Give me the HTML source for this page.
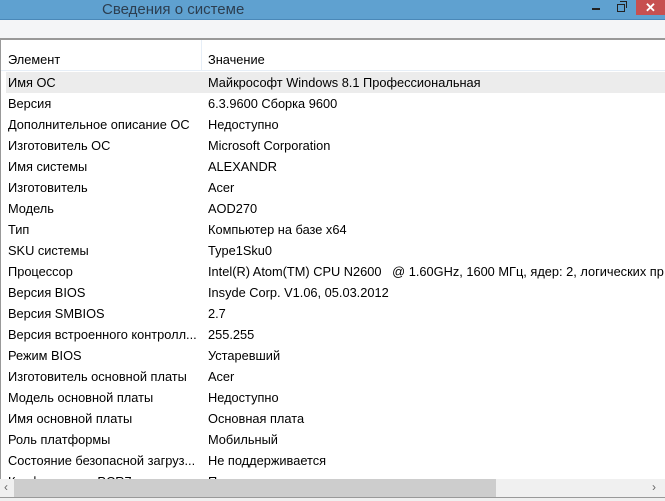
<!DOCTYPE html><html><head><style>
body{margin:0;width:665px;height:501px;overflow:hidden;background:#f0f0f0;font-family:"Liberation Sans",sans-serif;font-size:12.8px;color:#000;position:relative}
.tb{position:absolute;left:0;top:0;width:665px;height:19px;background:#5fa1d0;border-bottom:1px solid #4a88b8}
.tb .t{position:absolute;left:102px;top:1px;font-size:15px;color:#2c3e50;line-height:18px}
.cl{position:absolute;left:636px;top:0;width:29px;height:15px;background:#c75050;color:#fff;font-size:13px;text-align:center;line-height:15px;font-weight:bold}
.band{position:absolute;left:0;top:20px;width:665px;height:18px;background:#f4f5f7}
.list{position:absolute;left:0;top:38px;width:665px;height:441px;background:#fff;border-top:2px solid #999;border-left:1px solid #999;box-sizing:border-box;overflow:hidden}
.hd{position:absolute;top:0;left:0;width:665px;height:30px;border-bottom:1px solid #e6eef7}
.hd span,.r span{position:absolute;white-space:nowrap}
.hd .sep{position:absolute;left:200px;top:0;width:1px;height:30px;background:#e6eef7}
.r{position:absolute;left:5px;width:660px;height:21px;line-height:21px}
.sb{position:absolute;left:0;top:479px;width:665px;height:18px;background:#f0f0f0}
.thumb{position:absolute;left:14px;top:479px;width:482px;height:18px;background:#cdcdcd}
</style></head><body>
<div class="tb"><span class="t">Сведения о системе</span>
<div style="position:absolute;left:592px;top:8px;width:8px;height:2px;background:#222"></div>
<div style="position:absolute;left:617px;top:4px;width:6px;height:6px;border:1.5px solid #222"></div>
<div style="position:absolute;left:620px;top:1px;width:6px;height:6px;border-top:1.5px solid #222;border-right:1.5px solid #222"></div>
<div class="cl">✕</div></div>
<div class="band"></div>
<div class="list">
<div class="hd"><span style="left:7px;top:12px">Элемент</span><div class="sep"></div><span style="left:207px;top:12px">Значение</span></div>
<div class="r" style="top:32px;background:#ececec"><span style="left:2px">Имя ОС</span><span style="left:202px">Майкрософт Windows 8.1 Профессиональная</span></div>
<div class="r" style="top:53px"><span style="left:2px">Версия</span><span style="left:202px">6.3.9600 Сборка 9600</span></div>
<div class="r" style="top:74px"><span style="left:2px">Дополнительное описание ОС</span><span style="left:202px">Недоступно</span></div>
<div class="r" style="top:95px"><span style="left:2px">Изготовитель ОС</span><span style="left:202px">Microsoft Corporation</span></div>
<div class="r" style="top:116px"><span style="left:2px">Имя системы</span><span style="left:202px">ALEXANDR</span></div>
<div class="r" style="top:137px"><span style="left:2px">Изготовитель</span><span style="left:202px">Acer</span></div>
<div class="r" style="top:158px"><span style="left:2px">Модель</span><span style="left:202px">AOD270</span></div>
<div class="r" style="top:179px"><span style="left:2px">Тип</span><span style="left:202px">Компьютер на базе x64</span></div>
<div class="r" style="top:200px"><span style="left:2px">SKU системы</span><span style="left:202px">Type1Sku0</span></div>
<div class="r" style="top:221px"><span style="left:2px">Процессор</span><span style="left:202px">Intel(R) Atom(TM) CPU N2600&nbsp;&nbsp; @ 1.60GHz, 1600 МГц, ядер: 2, логических пр</span></div>
<div class="r" style="top:242px"><span style="left:2px">Версия BIOS</span><span style="left:202px">Insyde Corp. V1.06, 05.03.2012</span></div>
<div class="r" style="top:263px"><span style="left:2px">Версия SMBIOS</span><span style="left:202px">2.7</span></div>
<div class="r" style="top:284px"><span style="left:2px">Версия встроенного контролл...</span><span style="left:202px">255.255</span></div>
<div class="r" style="top:305px"><span style="left:2px">Режим BIOS</span><span style="left:202px">Устаревший</span></div>
<div class="r" style="top:326px"><span style="left:2px">Изготовитель основной платы</span><span style="left:202px">Acer</span></div>
<div class="r" style="top:347px"><span style="left:2px">Модель основной платы</span><span style="left:202px">Недоступно</span></div>
<div class="r" style="top:368px"><span style="left:2px">Имя основной платы</span><span style="left:202px">Основная плата</span></div>
<div class="r" style="top:389px"><span style="left:2px">Роль платформы</span><span style="left:202px">Мобильный</span></div>
<div class="r" style="top:410px"><span style="left:2px">Состояние безопасной загруз...</span><span style="left:202px">Не поддерживается</span></div>
<div class="r" style="top:431px"><span style="left:2px">Конфигурация PCR7</span><span style="left:202px">Привязка невозможна</span></div>
</div>
<div class="sb"></div><div class="thumb"></div>
<div style="position:absolute;left:4px;top:480px;font-size:12px;color:#666">‹</div>
<div style="position:absolute;left:652px;top:480px;font-size:12px;color:#666">›</div>
<div style="position:absolute;left:0;top:497px;width:665px;height:1px;background:#999"></div>
</body></html>
